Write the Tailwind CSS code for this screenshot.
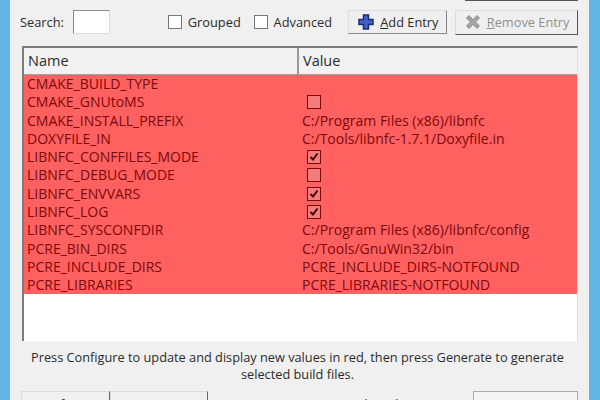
<!DOCTYPE html>
<html><head><meta charset="utf-8"><script src="https://cdn.jsdelivr.net/npm/@tailwindcss/browser@4"></script></head>
<body class="m-0">
<div class="w-[600px] h-[400px] overflow-hidden flex bg-[#f0f0f0] font-['Open_Sans','Noto_Sans',sans-serif] text-[14px] text-[#2b2b2b] leading-[18px]">
  <div class="w-[10px] shrink-0 bg-[#62b5e5]"></div>
  <div class="w-[579px] shrink-0 flex flex-col pl-[12px] pr-[11px]">
    <div class="h-[2px] shrink-0 flex justify-end"><div class="w-[113px] h-[1px] bg-[#555]"></div></div>
    <div class="h-[40px] mb-[4px] shrink-0 flex items-center text-[12.8px] whitespace-nowrap">
      <span class="w-[53px] -ml-[2px]">Search:</span>
      <span class="w-[37px] h-[24px] bg-white border border-[#8a8a8a] border-r-[#ddd] border-b-[#ddd]"></span>
      <span class="w-[14px] h-[14px] ml-[58px] bg-white border border-[#777]"></span>
      <span class="ml-[6px] w-[66px]">Grouped</span>
      <span class="w-[14px] h-[14px] bg-white border border-[#777]"></span>
      <span class="ml-[6px] w-[75px]">Advanced</span>
      <span class="w-[99px] h-[24px] flex items-center justify-center gap-[5px] bg-[#efefef] border border-[#ddd] border-r-[#888] border-b-[#888]">
        <svg width="18" height="18" viewBox="0 0 18 18"><path d="M6.500 2h5v4.500h4.500v5h-4.500v4.500h-5v-4.500h-4.500v-5h4.500z" fill="#3d62c4" stroke="#1c2c78" stroke-width="1.500"/></svg>
        <span><u>A</u>dd Entry</span>
      </span>
      <span class="w-[123px] h-[25px] ml-[8px] flex items-center justify-center gap-[5px] text-[#8f8f8f] bg-[#efefef] border border-[#ddd] border-r-[#555] border-b-[#555]">
        <svg width="18" height="18" viewBox="0 0 18 18"><path d="M3 5l2-2 4 4 4-4 2 2-4 4 4 4-2 2-4-4-4 4-2-2 4-4z" fill="#a9a9a9" stroke="#999" stroke-width="1.500"/></svg>
        <span><u>R</u>emove Entry</span>
      </span>
    </div>
    <div class="h-[295px] shrink-0 bg-white border-l-2 border-t-2 border-[#7d7d7d] border-r border-r-[#ddd] flex flex-col">
      <div class="h-[27px] shrink-0 flex bg-[#f2f2f2] border-b border-[#a0a0a0] text-[14.500px]">
        <div class="w-[275px] pl-[4px] flex items-center border-r-2 border-[#999]">Name</div>
        <div class="pl-[4px] flex items-center">Value</div>
      </div>
      <div class="h-[219px] shrink-0 bg-[#ff6060] text-[#7c0a0a]">
        <div class="flex h-[18.270px] items-center"><span class="w-[275px] pl-[3px]">CMAKE_BUILD_TYPE</span><span class="pl-[3px]"></span></div>
        <div class="flex h-[18.270px] items-center"><span class="w-[275px] pl-[3px]">CMAKE_GNUtoMS</span><span class="w-[14px] h-[14px] ml-[8px] border border-[#7c0a0a] bg-[#f47c7c]"></span></div>
        <div class="flex h-[18.270px] items-center"><span class="w-[275px] pl-[3px]">CMAKE_INSTALL_PREFIX</span><span class="pl-[3px]">C:/Program Files (x86)/libnfc</span></div>
        <div class="flex h-[18.270px] items-center"><span class="w-[275px] pl-[3px]">DOXYFILE_IN</span><span class="pl-[3px]">C:/Tools/libnfc-1.7.1/Doxyfile.in</span></div>
        <div class="flex h-[18.270px] items-center"><span class="w-[275px] pl-[3px]">LIBNFC_CONFFILES_MODE</span><span class="w-[14px] h-[14px] ml-[8px] border border-[#7c0a0a] bg-[#f47c7c]"><svg class="block" width="12" height="12" viewBox="0 0 12 12"><path d="M2.500 6l2.500 2.500 4.500-6" fill="none" stroke="#3a0505" stroke-width="2"/></svg></span></div>
        <div class="flex h-[18.270px] items-center"><span class="w-[275px] pl-[3px]">LIBNFC_DEBUG_MODE</span><span class="w-[14px] h-[14px] ml-[8px] border border-[#7c0a0a] bg-[#f47c7c]"></span></div>
        <div class="flex h-[18.270px] items-center"><span class="w-[275px] pl-[3px]">LIBNFC_ENVVARS</span><span class="w-[14px] h-[14px] ml-[8px] border border-[#7c0a0a] bg-[#f47c7c]"><svg class="block" width="12" height="12" viewBox="0 0 12 12"><path d="M2.500 6l2.500 2.500 4.500-6" fill="none" stroke="#3a0505" stroke-width="2"/></svg></span></div>
        <div class="flex h-[18.270px] items-center"><span class="w-[275px] pl-[3px]">LIBNFC_LOG</span><span class="w-[14px] h-[14px] ml-[8px] border border-[#7c0a0a] bg-[#f47c7c]"><svg class="block" width="12" height="12" viewBox="0 0 12 12"><path d="M2.500 6l2.500 2.500 4.500-6" fill="none" stroke="#3a0505" stroke-width="2"/></svg></span></div>
        <div class="flex h-[18.270px] items-center"><span class="w-[275px] pl-[3px]">LIBNFC_SYSCONFDIR</span><span class="pl-[3px]">C:/Program Files (x86)/libnfc/config</span></div>
        <div class="flex h-[18.270px] items-center"><span class="w-[275px] pl-[3px]">PCRE_BIN_DIRS</span><span class="pl-[3px]">C:/Tools/GnuWin32/bin</span></div>
        <div class="flex h-[18.270px] items-center"><span class="w-[275px] pl-[3px]">PCRE_INCLUDE_DIRS</span><span class="pl-[3px]">PCRE_INCLUDE_DIRS-NOTFOUND</span></div>
        <div class="flex h-[18.270px] items-center"><span class="w-[275px] pl-[3px]">PCRE_LIBRARIES</span><span class="pl-[3px]">PCRE_LIBRARIES-NOTFOUND</span></div>
      </div>
    </div>
    <div class="h-[50px] shrink-0 pt-[8px] pr-[5px] text-center text-[12.750px] leading-[17px] whitespace-nowrap">Press Configure to update and display new values in red, then press Generate to generate<br>selected build files.</div>
    <div class="flex items-start shrink-0 text-[12.8px] whitespace-nowrap">
      <span class="w-[90px] -ml-[1px] h-[20px] pt-[3px] border border-[#ddd] border-r-[#666] border-b-[#666] text-center">Configure</span>
      <span class="w-[99px] h-[20px] pt-[3px] border border-[#ddd] border-r-[#666] border-b-[#666] text-center">Generate</span>
      <span class="ml-[7px] w-[255px] pt-[4px]">Current Generator: Visual Studio</span>
      <span class="ml-[5px] w-[106px] h-[20px] border border-[#aaa] bg-[#f4f4f4]"></span>
    </div>
  </div>
  <div class="w-[11px] shrink-0 bg-[#62b5e5]"></div>
</div>
</body></html>
